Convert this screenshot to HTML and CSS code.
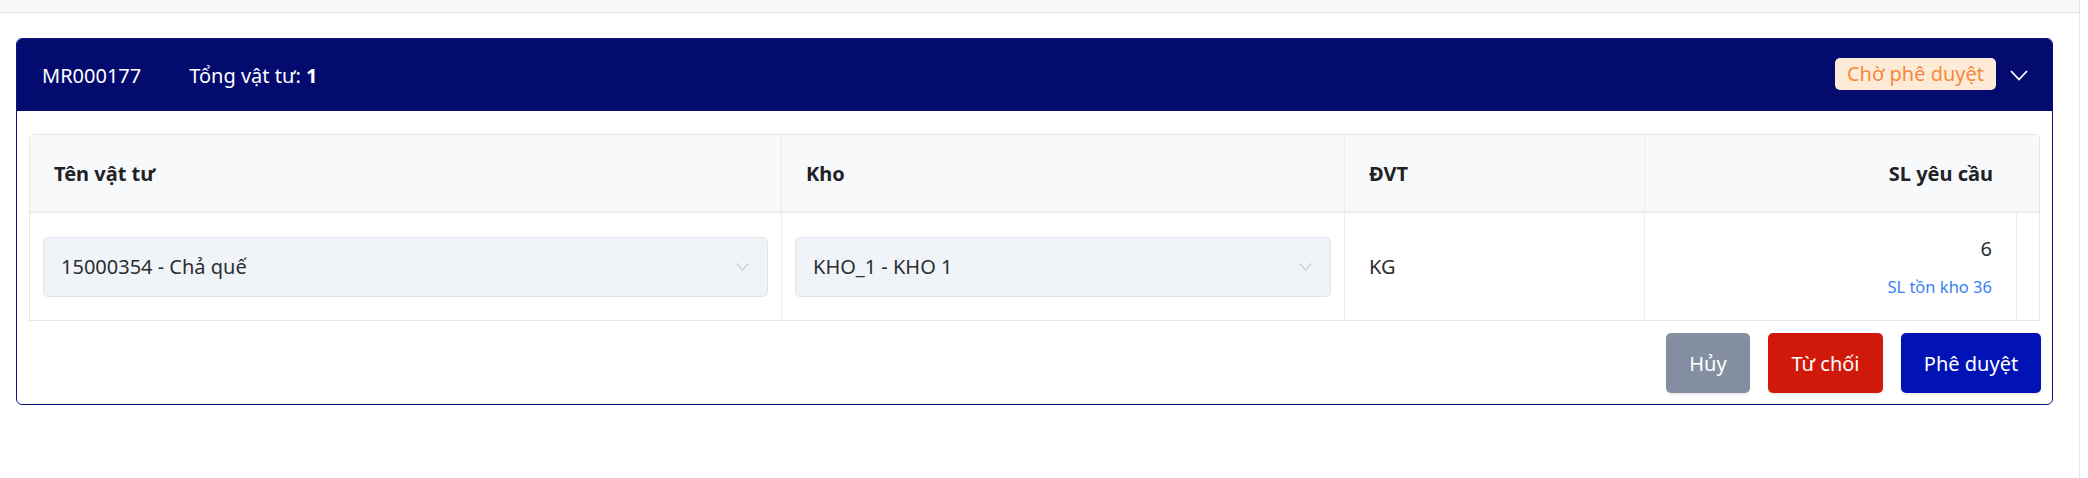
FILE: index.html
```html
<!DOCTYPE html>
<html lang="vi">
<head>
<meta charset="utf-8">
<title>MR000177</title>
<link rel="stylesheet" href="styles.css">
</head>
<body>
<div class="page">
  <main class="main">
    <div class="topbar"></div>
    <div class="content">
      <section class="card">
        <header class="card-header">
          <span class="code">MR000177</span>
          <span class="total">Tổng vật tư: <b>1</b></span>
          <span class="spacer"></span>
          <span class="badge">Chờ phê duyệt</span>
          <svg class="caret" width="18" height="11" viewBox="0 0 18 11"><polyline points="1,1 9,9.5 17,1" fill="none" stroke="#ffffff" stroke-width="1.8"/></svg>
        </header>
        <div class="card-body">
          <div class="table">
            <div class="row head">
              <div class="th">Tên vật tư</div>
              <div class="th">Kho</div>
              <div class="th">ĐVT</div>
              <div class="th th-right">SL yêu cầu</div>
            </div>
            <div class="row body">
              <div class="td">
                <div class="select"><span>15000354 - Chả quế</span>
                  <svg class="sel-caret" width="13" height="8" viewBox="0 0 13 8"><polyline points="0.5,0.5 6.5,7 12.5,0.5" fill="none" stroke="#babec6" stroke-width="1.1"/></svg>
                </div>
              </div>
              <div class="td">
                <div class="select"><span>KHO_1 - KHO 1</span>
                  <svg class="sel-caret" width="13" height="8" viewBox="0 0 13 8"><polyline points="0.5,0.5 6.5,7 12.5,0.5" fill="none" stroke="#babec6" stroke-width="1.1"/></svg>
                </div>
              </div>
              <div class="td">KG</div>
              <div class="td td-right">
                <div class="qty">6</div>
                <div class="stock">SL tồn kho 36</div>
              </div>
              <div class="td gutter"></div>
            </div>
          </div>
          <div class="actions">
            <button class="btn btn-gray">Hủy</button>
            <button class="btn btn-red">Từ chối</button>
            <button class="btn btn-blue">Phê duyệt</button>
          </div>
        </div>
      </section>
    </div>
  </main>
  <aside class="aside"></aside>
</div>
</body>
</html>
```

FILE: styles.css
```css
* { box-sizing: border-box; }
html, body { margin: 0; padding: 0; background: #ffffff; }
body { font-family: "Noto Sans", "Open Sans", sans-serif; color: #2b2d31; }

.page { display: flex; height: 478px; }
.main { flex: 1; border-right: 1px solid #e3e6ee; }
.aside { width: 8px; background: #ffffff; }

.topbar { height: 13px; background: #f8f9fb; border-bottom: 1px solid #e5e7ee; }
.content { padding: 25px 26px 0 16px; }

.card { border: 1px solid #0a1380; border-radius: 6px; overflow: hidden; }
.card-header {
  height: 72px; background: #030b6f; color: #ffffff;
  display: flex; align-items: center; padding: 0 24px 0 25px;
  font-size: 20px;
}
.code { margin-right: 48px; }
.total b { font-weight: 700; }
.spacer { flex: 1; }
.badge {
  background: #fdebd8; color: #f5893c; border-radius: 5px;
  height: 32px; line-height: 32px; padding: 0 12px; font-size: 20px;
  margin-top: -2px;
}
.caret { margin-left: 14px; }

.card-body { padding: 23px 12px 11px 12px; }

.table { border: 1px solid #e6e6e6; border-radius: 4px 4px 0 0; }
.row { display: grid; grid-template-columns: 752px 563px 300px 1fr 22px; }
.head { background: #f8f9fb; border-bottom: 2px solid #ececec; }
.th {
  height: 76px; display: flex; align-items: center; padding: 0 24px;
  font-weight: 700; font-size: 20px; color: #1f2226;
  border-right: 1px solid #ececec;
}
.th-right { grid-column: span 2; justify-content: flex-end; padding-right: 46px; border-right: none; }

.body .td {
  height: 107px; display: flex; align-items: center; padding: 0 13px 0 13px;
  border-right: 1px solid #ececec; font-size: 20px; color: #2b2d31;
}
.body .td:nth-child(3) { padding-left: 24px; }
.body .gutter { border-right: none; padding: 0; }
.td-right { flex-direction: column; justify-content: center; align-items: flex-end !important; padding-right: 24px !important; }
.qty { line-height: 30px; font-size: 20px; }
.stock { line-height: 24px; margin-top: 11px; font-size: 16.5px; color: #3b7ff5; }

.select {
  width: 100%; height: 60px; background: #f0f3f8; border: 1px solid #e0e4ec; border-radius: 5px;
  display: flex; align-items: center; justify-content: space-between; padding: 0 18px 0 17px;
}
.select span { color: #2b2d31; }

.actions { display: flex; justify-content: flex-end; gap: 18px; margin-top: 12px; margin-right: -1px; }
.btn {
  height: 60px; border: none; border-radius: 5px; color: #ffffff;
  font-family: "Noto Sans", "Open Sans", sans-serif; font-size: 20px; padding: 0;
  box-shadow: 0 2px 2px rgba(0,0,0,0.07);
}
.btn-gray { background: #838fa0; width: 84px; }
.btn-red { background: #d0190b; width: 115px; }
.btn-blue { background: #0213b6; width: 140px; }
```
